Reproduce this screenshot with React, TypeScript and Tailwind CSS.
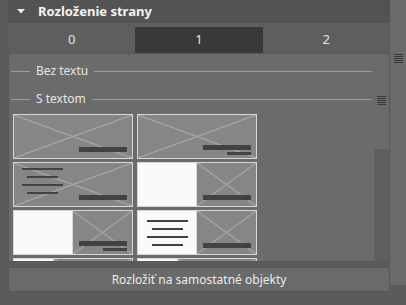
import React from "react";

type Thumb = {
  split: "none" | "half" | "third";
  lines?: "left" | "center";
  bars: "one" | "two";
};

const thumbs: Thumb[] = [
  { split: "none", bars: "one" },
  { split: "none", bars: "two" },
  { split: "none", lines: "left", bars: "one" },
  { split: "half", bars: "one" },
  { split: "half", bars: "two" },
  { split: "half", lines: "center", bars: "one" },
  { split: "third", bars: "one" },
  { split: "third", bars: "one" },
];

// Grip icon (little stacked lines)
const Grip = () => (
  <svg width="9" height="10" viewBox="0 0 9 10" shapeRendering="crispEdges">
    {[0, 2, 4, 6, 8].map((y) => (
      <rect key={y} x="0" y={y} width="9" height="1" fill="#3a3a3a" />
    ))}
  </svg>
);

const ImageArea = () => (
  <svg className="w-full h-full block" viewBox="0 0 100 100" preserveAspectRatio="none">
    <rect x="0" y="0" width="100" height="100" fill="#868686" />
    <line x1="0" y1="0" x2="100" y2="100" stroke="#a6a6a6" strokeWidth="1.2" vectorEffect="non-scaling-stroke" />
    <line x1="100" y1="0" x2="0" y2="100" stroke="#a6a6a6" strokeWidth="1.2" vectorEffect="non-scaling-stroke" />
  </svg>
);

const ThumbCard = ({ t }: { t: Thumb }) => {
  return (
    <div className="relative w-[120px] h-[45px] border border-[#d6d6d6] flex overflow-hidden">
      {t.split === "half" && (
        <div className="w-[59px] h-full bg-[#fafafa] border-r border-[#d6d6d6] flex flex-col items-center justify-center gap-[6px]">
          {t.lines === "center" && (
            <>
              <div className="w-[41px] h-[2px] bg-[#424242]" />
              <div className="w-[31px] h-[2px] bg-[#424242]" />
              <div className="w-[41px] h-[2px] bg-[#424242]" />
              <div className="w-[31px] h-[2px] bg-[#424242]" />
            </>
          )}
        </div>
      )}
      {t.split === "third" && (
        <div className="w-[40px] h-full bg-[#fafafa] border-r border-[#d6d6d6]" />
      )}
      <div className="relative flex-1 h-full">
        <ImageArea />
        {t.lines === "left" && (
          <div className="absolute left-[8px] top-[5px] flex flex-col gap-[6px]">
            <div className="w-[41px] h-[2px] bg-[#424242]" />
            <div className="w-[31px] h-[2px] bg-[#424242] ml-[5px]" />
            <div className="w-[41px] h-[2px] bg-[#424242]" />
            <div className="w-[31px] h-[2px] bg-[#424242] ml-[5px]" />
          </div>
        )}
        {t.bars === "one" ? (
          <div className="absolute right-[5px] bottom-[6px] w-[48px] h-[5px] bg-[#424242]" />
        ) : (
          <div className="absolute right-[5px] bottom-[3px] flex flex-col items-end gap-[2px]">
            <div className="w-[48px] h-[5px] bg-[#424242]" />
            <div className="w-[24px] h-[3px] bg-[#424242]" />
          </div>
        )}
      </div>
    </div>
  );
};

const SectionLabel = ({ label }: { label: string }) => (
  <div className="flex items-center h-[18px] pl-[2px] pr-[17px]">
    <div className="w-[19px] h-px bg-[#9c9c9c]" />
    <span className="px-[6px] text-[12px] text-[#e6e6e6] leading-none">{label}</span>
    <div className="flex-1 h-px bg-[#9c9c9c]" />
  </div>
);

export default function App() {
  return (
    <div
      className="w-[406px] h-[305px] bg-[#5b5b5b] flex overflow-hidden"
      style={{ fontFamily: '"Noto Sans", "Open Sans", sans-serif' }}
    >
      {/* Main column */}
      <div className="w-[390px] pl-2 flex flex-col">
        {/* Header */}
        <div className="h-[23px] bg-[#535353] flex items-center">
          <svg width="8" height="5" viewBox="0 0 8 5" className="ml-[9px]">
            <polygon points="0,0 8,0 4,4.5" fill="#f2f2f2" />
          </svg>
          <span className="ml-[13px] text-[13px] font-bold text-[#f4f4f4] leading-none">
            Rozloženie strany
          </span>
        </div>

        {/* Tabs */}
        <div className="h-[30px] bg-[#5e5e5e] grid grid-cols-3 items-end">
          <div className="h-[26px] flex items-center justify-center text-[13px] text-[#e4e4e4]">0</div>
          <div className="h-[26px] flex items-center justify-center text-[13px] text-[#e4e4e4] bg-[#393939]">1</div>
          <div className="h-[26px] flex items-center justify-center text-[13px] text-[#e4e4e4]">2</div>
        </div>

        {/* Panel */}
        <div className="relative h-[209px] bg-[#6b6b6b] border border-[#575757] overflow-hidden">
          <div className="pt-[8px] flex flex-col">
            <SectionLabel label="Bez textu" />
            <div className="h-[10px]" />
            <SectionLabel label="S textom" />
            <div className="grid grid-cols-[120px_120px] gap-x-[4px] gap-y-[3px] pl-[4px] pt-[6px]">
              {thumbs.map((t, i) => (
                <ThumbCard key={i} t={t} />
              ))}
            </div>
          </div>
          {/* grip on section */}
          <div className="absolute right-[3px] top-[42px]">
            <Grip />
          </div>
          {/* scroll thumb */}
          <div className="absolute right-0 bottom-0 w-[15px] h-[112px] bg-[#5f5f5f]" />
        </div>

        {/* Button */}
        <div className="mt-[5px] h-[25px] bg-[#6a6a6a] border border-[#555555] flex items-center justify-center text-[12px] text-[#ececec]">
          Rozložiť na samostatné objekty
        </div>
      </div>

      {/* Right strip */}
      <div className="w-4 h-[285px] bg-[#6a6a6a] flex justify-center pt-[54px]">
        <Grip />
      </div>
    </div>
  );
}
